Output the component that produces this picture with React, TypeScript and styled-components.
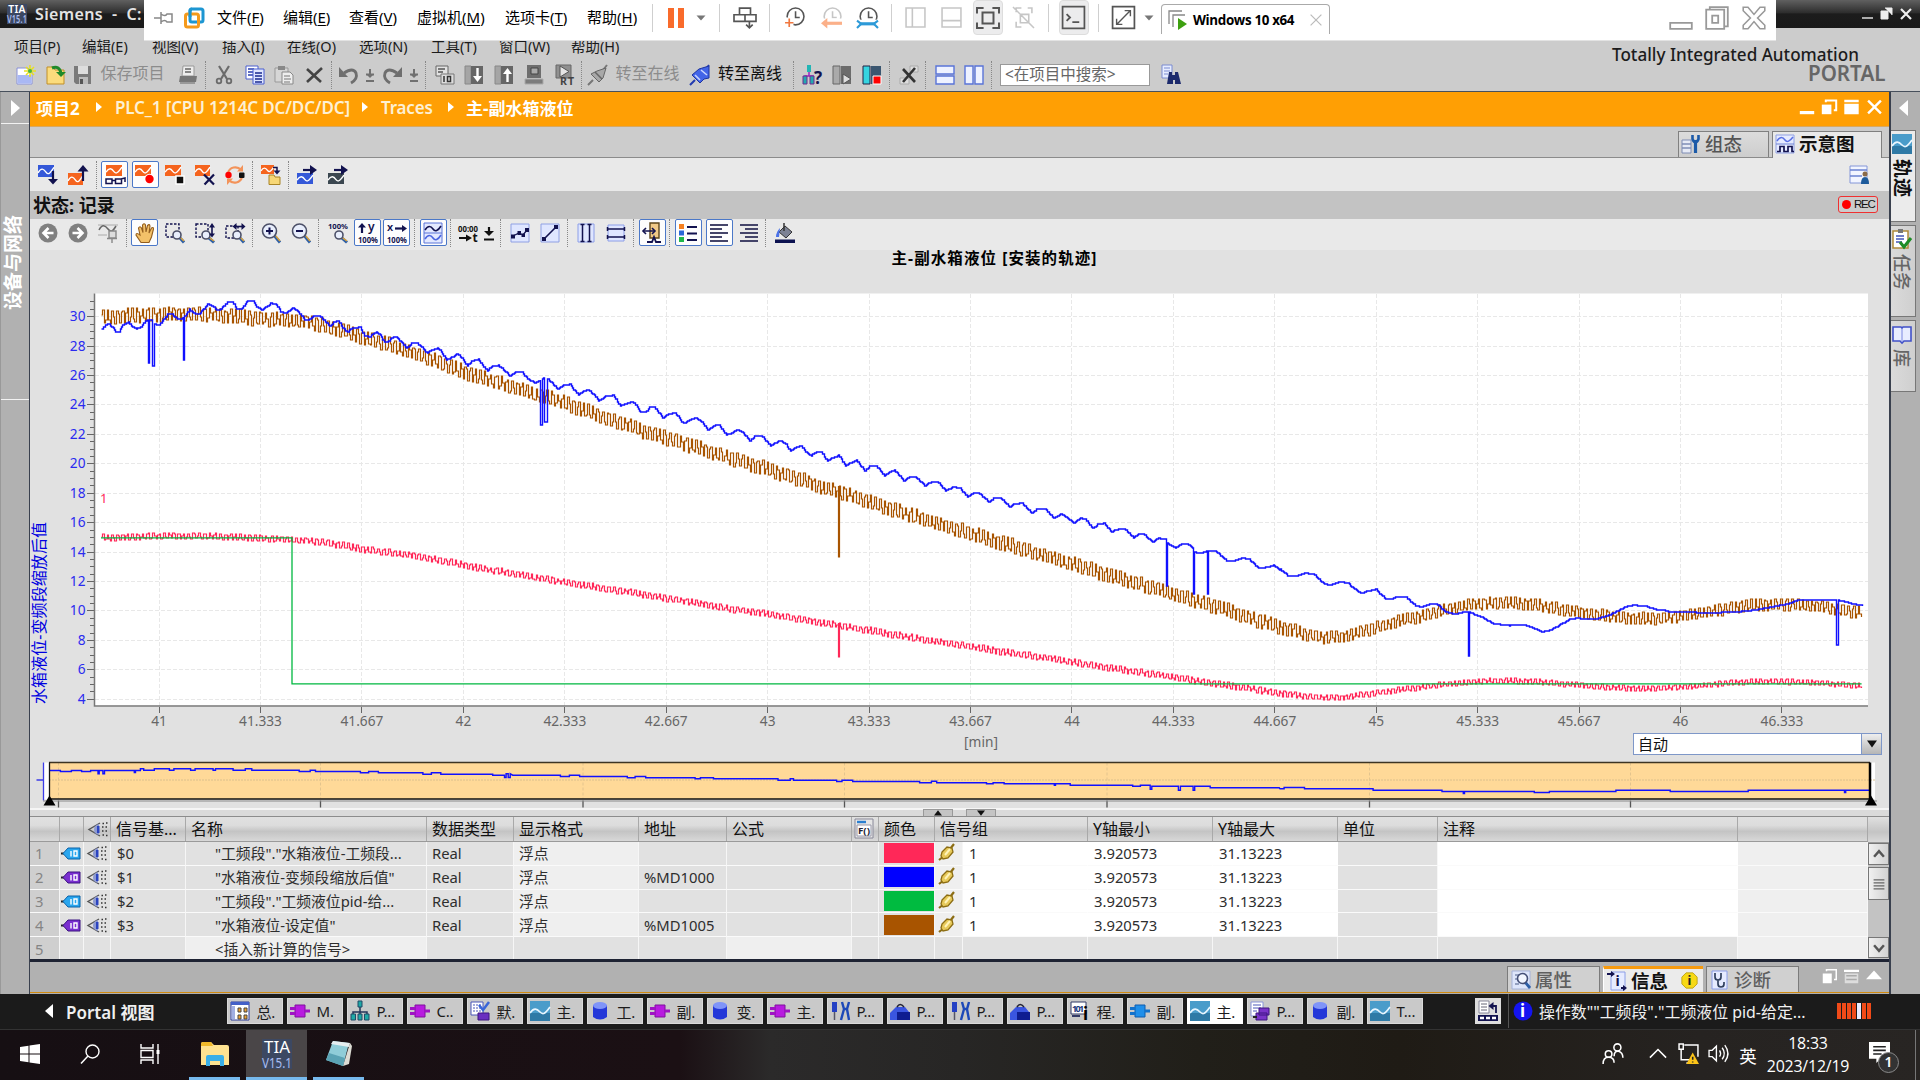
import React from "react";
import styled, { createGlobalStyle, css } from "styled-components";

const Global = createGlobalStyle`
  * { box-sizing: border-box; }
  html, body { margin: 0; padding: 0; width: 1920px; height: 1080px; overflow: hidden; }
  body { font-family: "Noto Sans", "Noto Sans CJK SC", sans-serif; font-size: 15px; color: #111; background: #b1b1b1; }
  svg { display: block; flex: none; overflow: visible; }
`;

/* ---------- frame ---------- */
const Screen = styled.div`
  position: relative; width: 1920px; height: 1080px; display: flex; flex-direction: column; overflow: hidden;
`;
const TitleBar = styled.header`
  height: 28px; flex: none; display: flex; align-items: center; padding: 0 7px 0 7px; color: #e4e4e4;
  background: linear-gradient(#606060, #2e2e2e 45%, #1c1c1c 50%, #1a1a1a);
  font-size: 16px; font-weight: 600; letter-spacing: 0.35px; white-space: pre;
`;
const TitleText = styled.span`margin-left: 8px; flex: 1;`;
const MenuBar = styled.nav`
  height: 36px; flex: none; background: #cccccc; display: flex; align-items: center; padding-left: 14px; padding-bottom: 2px; font-size: 14.5px;
`;
const MenuItem = styled.span<{ $w: number }>`width: ${(p) => p.$w}px; white-space: nowrap; color: #1b1b1b;`;
const Brand = styled.div`
  margin-left: auto; width: 308px; height: 36px; position: relative; top: 17px;
  font-weight: 500; line-height: 20px; color: #1c1c1c; font-size: 17.1px; white-space: nowrap;
  b { display: block; margin-left: 196px; font-size: 20.6px; color: #666; font-weight: 600; line-height: 20px; margin-top: -2px; }
  span { display: block; margin-top: 1px; }
`;
const ToolBar = styled.div<{ $h: number; $bg: string; $pl: number; $pb?: number }>`
  height: ${(p) => p.$h}px; flex: none; background: ${(p) => p.$bg}; padding-left: ${(p) => p.$pl}px;
  padding-bottom: ${(p) => p.$pb || 0}px; display: flex; align-items: center;
`;
const Slot = styled.div<{ $w: number }>`
  width: ${(p) => p.$w}px; flex: none; display: flex; align-items: center; justify-content: center;
`;
const Boxed = styled.div`
  width: 27px; height: 27px; border: 1.5px solid #4b78c8; background: #fdfdfd; border-radius: 2px;
  display: flex; align-items: center; justify-content: center; flex: none;
`;
const Sep = styled.div<{ $w: number }>`
  width: ${(p) => p.$w}px; height: 28px; flex: none; display: flex; justify-content: center;
  &::after { content: ""; border-left: 1px dotted #888; height: 100%; }
`;
const ToolLabel = styled.span<{ $w: number; $off?: boolean }>`
  width: ${(p) => p.$w}px; text-align: center; font-size: 16px; flex: none; white-space: nowrap; line-height: 20px; margin-top: -3px;
  color: ${(p) => (p.$off ? "#8c8c8c" : "#111")};
`;
const SearchBox = styled.div`
  width: 150px; height: 22px; margin-left: 6px; border: 1.5px solid #999; background: #fff; color: #666;
  font-size: 15.5px; line-height: 19px; padding-left: 4px; white-space: nowrap; flex: none;
`;
const Body = styled.div`height: 903px; flex: none; display: flex; border-top: 1.5px solid #47505c; background: #b1b1b1;`;

const LeftRail = styled.aside`
  width: 30px; flex: none; background: #b1b1b1; border-right: 1.5px solid #39404e; border-left: 1px solid #999;
  display: flex; flex-direction: column; align-items: center;
`;
const RailHead = styled.div<{ $plain?: boolean }>`
  height: 32px; width: 100%; border-bottom: 1.5px solid ${(p) => (p.$plain ? "transparent" : "#f2f2f2")}; display: flex; align-items: center; justify-content: center;
  margin-bottom: ${(p) => (p.$plain ? 6 : 0)}px; padding-right: ${(p) => (p.$plain ? 5 : 0)}px;
`;
const RailTitle = styled.div`
  height: 276px; width: 100%; border-bottom: 1.5px solid #f2f2f2; display: flex; justify-content: center; padding-top: 88px;
  span { writing-mode: vertical-rl; text-orientation: sideways; transform: rotate(180deg); color: #fff; font-weight: 700;
    font-size: 19px; height: 98px; line-height: 22px; margin-right: 4px; }
`;
const Center = styled.main`width: 1859px; flex: none; display: flex; flex-direction: column;`;
const RightRail = styled.aside`
  width: 31px; flex: none; border-left: 2px solid #39404e; background: #b1b1b1; display: flex; flex-direction: column;
`;
const RailTab = styled.div<{ $h: number; $mb: number; $active?: boolean }>`
  width: 25px; height: ${(p) => p.$h}px; margin-bottom: ${(p) => p.$mb}px; border: 1px solid #777; border-left: none;
  background: ${(p) => (p.$active ? "#ebebeb" : "linear-gradient(90deg,#dadada,#cfcfcf)")};
  display: flex; flex-direction: column; align-items: center; padding: 3px 2px 0 0;
  span { writing-mode: vertical-rl; text-orientation: sideways; margin-top: 5px; line-height: 22px; white-space: nowrap;
    font-size: ${(p) => (p.$active ? 19 : 18)}px; font-weight: ${(p) => (p.$active ? 700 : 500)}; color: ${(p) => (p.$active ? "#111" : "#666")}; }
`;
const Crumbs = styled.div`
  height: 35px; flex: none; background: #ff9f04; border-bottom: 1px solid #d9a860; color: #fff; display: flex; align-items: center;
  padding: 0 6px 4px 6px; font-size: 17px; font-weight: 600; white-space: nowrap;
`;
const Crumb = styled.span<{ $w: number; $strong?: boolean }>`
  width: ${(p) => p.$w}px; flex: none; color: ${(p) => (p.$strong ? "#fff" : "#fdf0d4")}; font-weight: ${(p) => (p.$strong ? 700 : 600)};
  letter-spacing: ${(p) => (p.$strong ? 0 : -0.15)}px;
`;
const CrumbArrow = styled.i<{ $w: number }>`
  width: ${(p) => p.$w}px; flex: none; &::after { content: ""; display: block; width: 0; border: 5px solid transparent; border-left: 6px solid #fff; border-right: 0; }
`;
const WinButtons = styled.div`margin-left: auto; display: flex; align-items: center; gap: 6px;`;
const TabStrip = styled.div`
  height: 31px; flex: none; background: #cccccc; border-bottom: 1.5px solid #8b8b8b; display: flex; justify-content: flex-end; align-items: flex-end; padding-right: 7px; gap: 3px;
`;
const ViewTab = styled.div<{ $w: number; $active?: boolean }>`
  width: ${(p) => p.$w}px; height: ${(p) => (p.$active ? 28 : 26)}px; margin-bottom: ${(p) => (p.$active ? -2 : 0)}px; border: 1.5px solid #808080; border-bottom: none;
  background: ${(p) => (p.$active ? "#e9e9e9" : "linear-gradient(#dcdcdc,#cdcdcd)")}; color: ${(p) => (p.$active ? "#111" : "#555")}; padding-bottom: ${(p) => (p.$active ? 4 : 2)}px;
  font-size: 18.5px; font-weight: ${(p) => (p.$active ? 700 : 500)}; display: flex; align-items: center; gap: 4px; padding-left: 2px; line-height: 24px;
`;
const StateBar = styled.div`
  height: 28px; flex: none; background: #c3c3c3; display: flex; align-items: center; justify-content: space-between; padding: 0 11px 2px 3px;
  font-size: 18px; font-weight: 700;
`;
const Rec = styled.div`
  width: 40px; height: 17px; border: 1.5px solid #f03030; border-radius: 3px; display: flex; align-items: center; gap: 3px; padding-left: 3px;
  font: 400 11.5px/14px "Liberation Sans", sans-serif; background: #ccc; letter-spacing: -1.3px;
  &::before { content: ""; width: 9px; height: 9px; border-radius: 50%; background: #f00; }
`;
const ChartPane = styled.section`height: 558px; flex: none; background: #e1e1e1; position: relative;`;
const ComboBox = styled.div`
  position: absolute; left: 1603px; top: 483px; width: 249px; height: 22px; border: 1px solid #7e97c8; background: #fff;
  font-size: 15px; line-height: 20px; padding-left: 4px; display: flex; justify-content: space-between;
  i { width: 20px; border-left: 1px solid #7e97c8; background: linear-gradient(#eee,#b5b5b5); display: flex; align-items: center; justify-content: center; }
`;
const Splitter = styled.div`
  height: 9px; flex: none; background: #dadada; border-top: 2px solid #f5f5f5; border-bottom: 1.5px solid #8c8c8c; display: flex; justify-content: center; gap: 13px; align-items: flex-end;
  i { width: 30px; height: 7px; background: #c4c4c4; border: 1px solid #999; border-bottom: 0; display: flex; align-items: center; justify-content: center; }
`;

/* ---------- signal table ---------- */
const COLS = "30px 24px 27px 75px 241px 87px 125px 88px 125px 27px 56px 28px 125px 125px 125px 100px 300px 130px";
const Table = styled.section`display: flex; height: 142px; flex: none; background: #efefef; overflow: hidden;`;
const Grid = styled.div`width: 1838px; flex: none;`;
const HeadRow = styled.div`
  display: grid; grid-template-columns: ${COLS}; height: 25px; border-bottom: 1.5px solid #9a9a9a; font-size: 16px;
  background: linear-gradient(#e0e0e0, #dcdcdc 35%, #c4c4c4 60%, #d8d8d8);
`;
const HeadCell = styled.div<{ $span?: number }>`
  ${(p) => p.$span && css`grid-column: span ${p.$span};`} border-right: 1px solid #a9a9a9; padding-left: 5px; display: flex; align-items: center; white-space: nowrap; line-height: 22px;
`;
const DataRow = styled.div`display: grid; grid-template-columns: ${COLS}; height: 23.8px; font-size: 14.8px;`;
const Cell = styled.div<{ $bg?: string; $pl?: number; $muted?: boolean }>`
  background: ${(p) => p.$bg || "#e1e1e1"}; padding-left: ${(p) => p.$pl ?? 5}px; color: ${(p) => (p.$muted ? "#858585" : "#2e2e2e")};
  border-right: 1px solid ${(p) => (p.$bg === "#fff" ? "#fff" : "#f6f6f6")}; border-bottom: 1.5px solid #fafafa;
  display: flex; align-items: center; white-space: nowrap; overflow: hidden; line-height: 20px;
`;
const Swatch = styled.div<{ $c: string }>`width: 50px; height: 20px; background: ${(p) => p.$c};`;
const ScrollCol = styled.div`
  width: 21px; background: #c3c3c3; display: flex; flex-direction: column;
`;
const ScrollTop = styled.div`height: 26px; background: linear-gradient(#e0e0e0, #c4c4c4 60%, #d8d8d8); border-bottom: 1.5px solid #9a9a9a;`;
const ScrollBtn = styled.div<{ $h: number; $mt?: number }>`
  height: ${(p) => p.$h}px; margin-top: ${(p) => p.$mt || 0}px; border: 1px solid #777; background: linear-gradient(90deg,#f0f0f0,#d2d2d2); display: flex; align-items: center; justify-content: center;
`;
const InfoStrip = styled.div`
  height: 34px; flex: none; border-top: 3px solid #1e2333; border-bottom: 1.5px solid #d08a10; background: #b1b1b1; display: flex; justify-content: flex-end; align-items: flex-end; gap: 3px;
`;
const InfoTab = styled.div<{ $w: number; $active?: boolean }>`
  width: ${(p) => p.$w}px; height: 26px; border: 1.5px solid #7b7b7b; border-bottom: 0; ${(p) => p.$active && css`border: 0; border-top: 3px solid #f59a10; border-left: 1px solid #fff;`}
  background: ${(p) => (p.$active ? "#ebebeb" : "#d0d0d0")}; color: ${(p) => (p.$active ? "#111" : "#5f5f5f")}; font-weight: ${(p) => (p.$active ? 700 : 500)};
  font-size: 18.5px; display: flex; align-items: center; gap: 4px; padding-left: 3px; line-height: 24px;
`;
const InfoBadge = styled.span`margin-left: 9px;`;
const InfoCorner = styled.div`width: 87px; height: 32px; display: flex; align-items: center; gap: 7px; padding-left: 20px;`;

/* ---------- portal bar & windows taskbar ---------- */
const PortalBar = styled.div`
  height: 36px; flex: none; background: #1b1b1b; display: flex; align-items: center; color: #efefef; border-bottom: 1px solid #333; padding-bottom: 1px;
`;
const PortalLink = styled.div`width: 226px; padding-left: 45px; display: flex; align-items: center; gap: 13px; font-size: 17px; font-weight: 600; white-space: nowrap;`;
const WinTabs = styled.div`display: flex; gap: 4px; width: 1249px; padding-left: 0.5px;`;
const WinTab = styled.div<{ $active?: boolean }>`
  width: 56px; height: 26px; background: ${(p) => (p.$active ? "#fff" : "#c9c9c9")}; border: 1px solid ${(p) => (p.$active ? "#fff" : "#dadada")}; color: #1c1c1c;
  display: flex; align-items: center; gap: 7px; padding-left: 2px; font-size: 15px; white-space: nowrap; overflow: hidden; letter-spacing: -0.2px;
`;
const KeepButton = styled.div`width: 26px; height: 26px; background: #ddd; display: flex; align-items: center; justify-content: center;`;
const Message = styled.div`
  margin-left: 7px; border-left: 1px solid #555; height: 100%; flex: 1; display: flex; align-items: center; padding-left: 4px; font-size: 15.9px; gap: 6px; white-space: nowrap; color: #f1f1f1;
  span { width: 292px; }
`;
const TaskBar = styled.footer`
  height: 50px; flex: none; display: flex; color: #fff; align-items: center;
  background: linear-gradient(90deg, #160f13 0, #1b1014 680px, #2b2a2a 770px, #272625 960px, #211f19 1200px, #1f1b15 1400px, #262321 1700px, #282523 1920px);
`;
const TaskCell = styled.div<{ $w: number; $on?: boolean; $line?: boolean }>`
  width: ${(p) => p.$w}px; height: 50px; flex: none; display: flex; align-items: center; justify-content: center;
  background: ${(p) => (p.$on ? "#4a4648" : "transparent")}; border-bottom: ${(p) => (p.$line ? "3px solid #76b9ed" : "3px solid transparent")};
`;
const TaskGap = styled.div<{ $w: number }>`width: ${(p) => p.$w}px; flex: none;`;
const Clock = styled.div`width: 88px; text-align: center; font-size: 15.9px; line-height: 23px; font-family: "Open Sans","Noto Sans",sans-serif; letter-spacing: -0.2px; white-space: nowrap;`;
const Lang = styled.span`width: 28px; text-align: center; font-size: 17.5px; flex: none;`;
const Badge = styled.span`
  position: absolute; left: 18px; top: 13px; width: 21px; height: 21px; border-radius: 50%; background: #333; border: 1.5px solid #8a8a8a; font-size: 14px; line-height: 18px; text-align: center; font-weight: 600;
`;
const Notice = styled.div`position: relative; width: 42px; height: 32px; padding: 3px 0 0 9px; flex: none;`;
const ShowDesktop = styled.div`width: 5px; height: 50px; border-left: 1px solid #777; margin-left: auto;`;

/* ---------- VM host bar (floats over the guest desktop) ---------- */
const HostBar = styled.div`
  position: absolute; left: 144px; top: 0; width: 1632px; height: 41px; background: #fff; border-bottom: 1.5px solid #e3e3e3; display: flex; align-items: flex-start; font-size: 15px; color: #000;
`;
const HostSlot = styled.div<{ $w: number }>`width: ${(p) => p.$w}px; height: 35px; flex: none; display: flex; align-items: center; justify-content: center;`;
const HostMenu = styled.span<{ $w: number }>`width: ${(p) => p.$w}px; flex: none; height: 35px; line-height: 34px; white-space: nowrap; u { text-underline-offset: 2px; }`;
const HostSep = styled.div<{ $w: number }>`width: ${(p) => p.$w}px; height: 32px; flex: none; padding-top: 4px; display: flex; justify-content: center; &::after { content: ""; width: 1px; height: 28px; background: #cfcfcf; }`;
const HostBox = styled.div`width: 30px; height: 35px; border: 1px solid #ddd; background: #ececed; border-radius: 4px; display: flex; align-items: center; justify-content: center; flex: none;`;
const HostTab = styled.div`
  width: 169px; height: 30px; margin-top: 4px; border: 1px solid #aaa; border-bottom: 0; border-radius: 4px 4px 0 0; display: flex; align-items: center; padding-left: 6px; gap: 5px; flex: none;
  font: 700 13.4px/28px "Open Sans","Noto Sans",sans-serif; letter-spacing: -0.35px; white-space: nowrap;
  span { width: 112px; }
`;

/* ---------- icons ---------- */
const I = ({ s = 20, w, children, vb = "0 0 20 20" }: any) => (
  <svg width={w || s} height={s} viewBox={vb} fill="none">{children}</svg>
);
const TiaTile = ({ s }: { s: number }) => (
  <I s={s} vb="0 0 30 30">
    <rect width="30" height="30" fill="#3c4862" />
    <text x="15" y="13.500" textAnchor="middle" fontSize="16" fill="#fff" textLength="26" lengthAdjust="spacingAndGlyphs">TIA</text>
    <text x="15" y="28.500" textAnchor="middle" fontSize="15" fill="#a9bdf0" textLength="30" lengthAdjust="spacingAndGlyphs">V15.1</text>
  </I>
);
const TraceTile = ({ c, x = 0, y = 0, w = 15, h = 12 }: any) => (
  <g transform={`translate(${x} ${y})`}>
    <rect width={w} height={h} fill={c} />
    <path d={`M0 ${h * 0.65}C${w * 0.2} ${h * 0.2} ${w * 0.35} ${h * 0.3} ${w * 0.5} ${h * 0.6}S${w * 0.8} ${h * 0.6} ${w} ${h * 0.2}`} stroke="#fff" strokeWidth="1.400" />
  </g>
);
const Lens = ({ x, y, r = 4 }: { x: number; y: number; r?: number }) => (
  <g><path d={`M${x + r * 0.7} ${y + r * 0.7}L19 19.500`} stroke="#2d5fa6" strokeWidth="3" /><path d={`M${x + r * 0.9} ${y + r * 0.7}L19 18`} stroke="#d9a23c" strokeWidth="1.500" /><circle cx={x} cy={y} r={r} fill="#e8eefc" stroke="#4c5068" strokeWidth="1.600" /></g>
);
const Star = () => (<g><path d="M14 0v12M8 6h12M10 2l8 8M18 2l-8 8" stroke="#e9e020" strokeWidth="1.600" /><circle cx="14" cy="6" r="2" fill="#3fb54a" /></g>);
const NAVY = "#12124f", OR = "#f5641e";
const ic: Record<string, React.ReactNode> = {
  newp: <I><path d="M1 3h11l4 4v12H1z" fill="#fff" stroke="#8890d8" /><path d="M1.500 10h14v8.500h-14z" fill="#a9b8f4" /><Star /></I>,
  open: <I><path d="M1 2h6l2 3h9v14H1z" fill="#fbdc7c" stroke="#c08f28" /><path d="M6 3q7-3 9 5" stroke="#1f8a2a" strokeWidth="3" /><path d="M10 7h10l-5 5z" fill="#1f8a2a" /></I>,
  save: <I><path d="M1 1h17v18H3l-2-2z" fill="#7a7a7a" /><path d="M5 1h10v8H5z" fill="#ddd" /><path d="M6 12h9v7H6z" fill="#bbb" /><path d="M7 14h3v5H7z" fill="#555" /></I>,
  print: <I><path d="M5 1h11v10H4z" fill="#eee" stroke="#999" /><path d="M7 4h6M7 7h6" stroke="#666" strokeWidth="1.500" /><path d="M2 11h17l-1 6H1z" fill="#777" /><path d="M2 17h15v2H2z" fill="#999" /></I>,
  cut: <I><path d="M5 1l8 13M15 1L7 14" stroke="#6b6b6b" strokeWidth="2.200" /><circle cx="5" cy="16" r="2.300" stroke="#6b6b6b" strokeWidth="1.800" /><circle cx="15" cy="16" r="2.300" stroke="#6b6b6b" strokeWidth="1.800" /></I>,
  copy: <I><path d="M1 1h12v13H1z" fill="#fff" stroke="#4a5fd0" /><path d="M3 4h6M3 7h6M3 10h6" stroke="#2a3fb0" strokeWidth="1.500" /><path d="M8 4h11v15H8z" fill="#dfe6ff" stroke="#4a5fd0" /><path d="M10 8h7M10 11h7M10 14h7M10 17h7" stroke="#1a2a90" strokeWidth="1.400" /></I>,
  paste: <I><path d="M1 3h13v14H1z" fill="#d6d6d6" stroke="#999" /><path d="M4 1h7v4H4z" fill="#888" /><path d="M8 7h8l3 3v9H8z" fill="#eee" stroke="#888" /><path d="M10 11h6M10 14h7M10 17h6" stroke="#777" /></I>,
  del: <I><path d="M3 4l14 13M18 3L3 17" stroke="#444" strokeWidth="2.600" /></I>,
  undo: <I><path d="M5 8q9-6 12 0 2 6-5 10" stroke="#6e6e6e" strokeWidth="2.800" /><path d="M0 2v10h9z" fill="#6e6e6e" /></I>,
  redo: <I><path d="M15 8Q6 2 3 8q-2 6 5 10" stroke="#6e6e6e" strokeWidth="2.800" /><path d="M20 2v10h-9z" fill="#6e6e6e" /></I>,
  pm: <I w={10} vb="5 0 10 20"><path d="M10 4v5M6 9.500h8M6 16h8" stroke="#707070" strokeWidth="2" /><path d="M7 10h6l-3 3z" fill="#707070" /></I>,
  pmd: <I w={10} vb="5 0 10 20"><path d="M10 4v5M5 16.500h10" stroke="#111" strokeWidth="2.200" /><path d="M5 8h10l-5 5z" fill="#111" /></I>,
  comp: <I><path d="M1 1h12v10H1z" fill="#e2e2e2" stroke="#666" /><path d="M3 4h7M3 7h5" stroke="#555" strokeWidth="1.300" /><path d="M6 9h13v10H6z" fill="#ddd" stroke="#777" /><path d="M9 11v6M12.500 11.500h3v5h-3z" stroke="#333" strokeWidth="1.500" /></I>,
  down: <I><path d="M1 1h6v18H1z" fill="#a5a5a5" stroke="#888" /><path d="M7 1h12v18H7z" fill="#666" /><path d="M13.500 3v10" stroke="#fff" strokeWidth="2.400" /><path d="M9 11h9l-4.500 6z" fill="#fff" /></I>,
  up: <I><path d="M1 1h6v18H1z" fill="#a5a5a5" stroke="#888" /><path d="M7 1h12v18H7z" fill="#666" /><path d="M13.500 7v10" stroke="#fff" strokeWidth="2.400" /><path d="M9 9h9l-4.500-6z" fill="#fff" /></I>,
  sim: <I><path d="M3 0h14v13H3z" fill="#6e6e6e" /><path d="M7 3h7v6H7z" fill="#aaa" stroke="#444" /><path d="M1 14h18v5H1z" fill="#7c7c7c" stroke="#aaa" /></I>,
  rt: <I><path d="M2 0h15v13H2z" fill="#909090" stroke="#666" /><path d="M6 1l9 5.500-9 5.500z" fill="#e5e5e5" stroke="#555" /><text x="6" y="20" fontSize="10.500" fontWeight="700" fill="#444" textLength="14">RT</text></I>,
  plugoff: <I><path d="M0 20l5-5M15 5l4-5" stroke="#777" strokeWidth="2" /><path d="M3 9l8 8 4-4 3-10-9 3z" fill="#a8a8a8" stroke="#666" /><path d="M7 7l7 7" stroke="#666" strokeWidth="1.500" /></I>,
  plugon: <I><path d="M0 20l5-5M15 5l4-5" stroke="#223bb0" strokeWidth="2" /><path d="M2 10l8 8 4-4 5-1V1L9 4z" fill="#4365e8" stroke="#1e34a0" /><path d="M5 10l5 5M11 5l6 5" stroke="#c9d5ff" strokeWidth="1.600" /></I>,
  netq: <I><path d="M5 0h4v7H5z" fill="#22b5b5" /><path d="M7 7v4M3 12v-1h8v1" stroke="#9a22c0" strokeWidth="1.500" /><path d="M1 11h4v8H1zM8 11h4v8H8z" fill="#22a8b0" stroke="#702a90" /><text x="12" y="18.500" fontSize="17" fontWeight="700" fill={NAVY}>?</text></I>,
  runoff: <I><path d="M1 1h7v18H1z" fill="#aaa" stroke="#666" /><path d="M9 1h10v18H9z" fill="#6c6c6c" /><path d="M11 9l8 5-8 5z" fill="#ddd" stroke="#555" /></I>,
  stop: <I><path d="M1 1h7v18H1z" fill="#35d4e0" stroke="#224" /><path d="M9 1h10v18H9z" fill="#3b5670" /><path d="M11 11h8v8h-8z" fill="#f00" stroke="#fff" /></I>,
  xx: <I><path d="M11 1h8v6h-8zM1 13h9v6H1z" fill="#ddd" stroke="#aaa" /><path d="M4 4l12 13M16 3L4 17" stroke="#333" strokeWidth="2.600" /></I>,
  splh: <I><path d="M1 1h18v8H1zM1 11h18v8H1z" fill="#eef2ff" stroke="#5a74d8" strokeWidth="1.400" /></I>,
  splv: <I><path d="M1 1h8v18H1zM11 1h8v18h-8z" fill="#eef2ff" stroke="#5a74d8" strokeWidth="1.400" /></I>,
  find: <I><path d="M1 0h10v13H1z" fill="#e6ecff" stroke="#7a8bd0" /><path d="M3 3h6M3 6h6M3 9h4" stroke="#7a8bd0" /><path d="M8 7h3v3h3V7h3l3 12h-6v-4h-2v4H6z" fill="#1c2a6c" /></I>,
  tdown: <I><TraceTile c="#3458d8" w={16} /><path d="M15 6v10" stroke={NAVY} strokeWidth="2.200" /><path d="M10 14h10l-5 5.500z" fill={NAVY} /></I>,
  tup: <I><TraceTile c={OR} y={8} /><path d="M15 4v12" stroke={NAVY} strokeWidth="2.200" /><path d="M9.500 6.500h11L15 0z" fill={NAVY} /></I>,
  tglass: <I><TraceTile c={OR} x={1} w={16} h={11} /><path d="M1 14h6v4.500H1zM10.500 14h6v4.500h-6zM7 15.500h3.500M16 14l4-1v4" stroke={NAVY} strokeWidth="1.500" /></I>,
  trec: <I><TraceTile c={OR} w={16} h={11} /><circle cx="14.500" cy="14" r="5.300" fill="#fff" /><circle cx="14.500" cy="14" r="4.200" fill="#f00" /></I>,
  tstop: <I><TraceTile c={OR} w={16} h={11} /><path d="M11 11h8v8h-8z" fill="#111" stroke="#fff" strokeWidth="1.500" /></I>,
  tdel: <I><TraceTile c={OR} w={15} h={11} /><path d="M9 9.500l10 10M19 9.500l-9.500 10" stroke={NAVY} strokeWidth="2.200" /></I>,
  tloop: <I><path d="M3 8a7.500 7.500 0 0 1 13-3M17 12a7.500 7.500 0 0 1-13 3" stroke="#f3935a" strokeWidth="2.200" /><path d="M12 6.500h6V0zM8 13.500H2V20z" fill="#f3935a" /><circle cx="3.500" cy="10" r="3.200" fill="#f00" /><rect x="14" y="7.500" width="5.500" height="5.500" rx="1" fill="#111" /></I>,
  texp: <I><TraceTile c={OR} w={13} h={9} /><path d="M12 2.500h4v4" stroke={NAVY} strokeWidth="1.500" /><path d="M12.500 5.500h7L16 9.500z" fill={NAVY} /><path d="M8 10h5l1 2h5v7.500H8z" fill="#f7d776" stroke="#a88427" /></I>,
  tarrb: <I><TraceTile c="#3458d8" y={8} w={16} h={11} /><path d="M6 5h9" stroke={NAVY} strokeWidth="2.200" /><path d="M13 0l7 5-7 5z" fill={NAVY} /></I>,
  tarrk: <I><TraceTile c="#3b4750" y={8} w={16} h={11} /><path d="M6 5h9" stroke={NAVY} strokeWidth="2.200" /><path d="M13 0l7 5-7 5z" fill={NAVY} /></I>,
  prev: <I><circle cx="10" cy="10" r="9.500" fill="#808080" /><path d="M15.500 10H7M10.500 5l-5 5 5 5" stroke="#fff" strokeWidth="2.600" /></I>,
  next: <I><circle cx="10" cy="10" r="9.500" fill="#808080" /><path d="M4.500 10H13M9.500 5l5 5-5 5" stroke="#fff" strokeWidth="2.600" /></I>,
  wpin: <I><path d="M0 2h20M0 12h9" stroke="#aaa" /><path d="M1 7c3-6 6-5 9-1s5 2 8-3" stroke="#666" strokeWidth="1.500" /><path d="M11 8h7v7h-7zM9 15.500h10M14 16v4" stroke="#888" strokeWidth="1.400" fill="#ddd" /></I>,
  hand: <I><path d="M6 19.500L1 12q0-3 4 0L3.500 5q1.500-2.500 3 0L8 9.500 7.500 2q2-2.500 3 0L11 9l1.500-6.500q2-2 2.500.5L14 10l2.500-5q2-1.500 2 1l-2 8-2.500 5.500z" fill="#f3c169" stroke="#935d1c" strokeWidth="1.100" /></I>,
  zoomr: <I><path d="M1 1h13v13H1z" stroke={NAVY} strokeDasharray="2.500 1.500" strokeWidth="1.400" /><Lens x={12} y={12} /></I>,
  zoomv: <I><path d="M1 1h12v13H1z" stroke={NAVY} strokeDasharray="2.500 1.500" strokeWidth="1.400" /><Lens x={11} y={12} /><path d="M17 3v9" stroke={NAVY} strokeWidth="1.600" /><path d="M14 4.500h6L17 0zM14 10.500h6l-3 4z" fill={NAVY} /></I>,
  zoomh: <I><path d="M1 3h12v12H1z" stroke={NAVY} strokeDasharray="2.500 1.500" strokeWidth="1.400" /><Lens x={12} y={12} /><path d="M10 3.500h8" stroke={NAVY} strokeWidth="1.600" /><path d="M11.500 0v7L7.500 3.500zM16.500 0v7l4-3.500z" fill={NAVY} /></I>,
  zin: <I><Lens x={8.5} y={8} r={7} /><path d="M5 8h7M8.500 4.500v7" stroke={NAVY} strokeWidth="2" /></I>,
  zout: <I><Lens x={8.5} y={8} r={7} /><path d="M5 8h7" stroke={NAVY} strokeWidth="2" /></I>,
  z100: <I><text x="0" y="5.500" fontSize="7.500" fontWeight="700" fill={NAVY} textLength="20" lengthAdjust="spacingAndGlyphs">100%</text><Lens x={11} y={12} r={4} /></I>,
  y100: <I><path d="M4 3v7" stroke={NAVY} strokeWidth="2.200" /><path d="M0 4.500h8L4 0z" fill={NAVY} /><text x="10" y="8" fontSize="12" fontWeight="600" fill={NAVY}>y</text><text x="0" y="19.500" fontSize="8" fontWeight="700" fill={NAVY} textLength="20" lengthAdjust="spacingAndGlyphs">100%</text></I>,
  x100: <I><text x="0" y="8" fontSize="11" fontWeight="600" fill={NAVY}>x</text><path d="M8 5.500h8" stroke={NAVY} strokeWidth="2.200" /><path d="M15 2v7l5-3.500z" fill={NAVY} /><text x="0" y="19.500" fontSize="8" fontWeight="700" fill={NAVY} textLength="20" lengthAdjust="spacingAndGlyphs">100%</text></I>,
  waves: <I><path d="M1 0h18v20H1z" fill="#e3e9ff" stroke="#5a74d8" /><path d="M2 7c3-5 6-4 8-1s5 2 8-3" stroke={NAVY} strokeWidth="1.600" /><path d="M2 16c3-5 6-4 8-1s5 2 8-3" stroke="#4b66e0" strokeWidth="1.600" /><path d="M1 10h18" stroke="#5a74d8" /></I>,
  time: <I><text x="0" y="8.500" fontSize="9" fontWeight="700" fill="#111" textLength="20" lengthAdjust="spacingAndGlyphs">00:00</text><path d="M1 15h8" stroke="#111" strokeWidth="2" /><path d="M8 11.500v7l6-3.500z" fill="#111" /><text x="14.500" y="19" fontSize="12" fontWeight="700" fill="#111">t</text></I>,
  dots: <I><path d="M1 1h18v18H1z" fill="#dfe6ff" stroke="#8fa0e4" /><path d="M3 13l6-3 4 2 4-5" stroke={NAVY} strokeWidth="1.300" /><path d="M1 11.500h4v4H1zM7.500 8h3.500v4H7.500zM11.500 10.500H15V14h-3.500zM15 5h4v4h-4z" fill={NAVY} /></I>,
  line: <I><path d="M1 1h18v18H1z" fill="#dfe6ff" stroke="#8fa0e4" /><path d="M4 16L16 4" stroke={NAVY} strokeWidth="1.600" /><path d="M2 14h4v4H2zM14 2h4v4h-4z" fill={NAVY} /></I>,
  vcur: <I><path d="M2 1h16v18H2z" fill="#dfe6ff" stroke="#8c9ee8" /><path d="M6.500 2v16M13.500 2v16M4.500 1.500h4M11.500 1.500h4M4.500 18.500h4M11.500 18.500h4" stroke={NAVY} strokeWidth="1.500" /></I>,
  hcur: <I><path d="M2 2h16v16H2z" fill="#dfe6ff" stroke="#8c9ee8" /><path d="M1 6h18M1 14h18M1.500 4v4M18.500 4v4M1.500 12v4M18.500 12v4" stroke={NAVY} strokeWidth="1.500" /></I>,
  fit: <I><path d="M8 0h9v15H8z" fill="#f0c987" stroke="#5c451a" strokeWidth="1.400" /><path d="M1 8h12" stroke={NAVY} strokeWidth="1.500" /><path d="M4 5L1 8l3 3M10 5l3 3-3 3" stroke={NAVY} strokeWidth="1.600" /><path d="M5 19h5l2-5 2 5h5" stroke={NAVY} strokeWidth="1.800" /></I>,
  legend: <I><path d="M1 1h5v5H1z" fill="#f58020" /><path d="M1 7.500h5v5H1z" fill="#2a68d8" /><path d="M1 14h5v5H1z" fill="#1fb84a" /><path d="M9 4h10M9 10.500h10M9 17h10" stroke={NAVY} strokeWidth="2" /></I>,
  left: <I><path d="M1 2h18M1 6h12M1 10h18M1 14h12M1 18h18" stroke="#45456a" strokeWidth="1.800" /></I>,
  right: <I><path d="M1 2h18M6 6h13M1 10h18M6 14h13M1 18h18" stroke="#45456a" strokeWidth="1.800" /></I>,
  fill: <I><path d="M10 3l7 6-6 6-7-6z" fill="#7d8294" stroke="#333" /><path d="M9 8V0" stroke="#333" strokeWidth="1.500" /><path d="M5 5q-4 4-4 9h3z" fill="#4b72e8" /><path d="M0 16.500h20v3.500H0z" fill="#0c1250" /></I>,
  cfg: <I><path d="M1 6h9v4H1zM1 10h9v4H1zM1 14h9v5H1z" fill="#e6eaf5" stroke="#7e8db5" /><path d="M14.500 6v13" stroke="#1c5aa8" strokeWidth="3.200" /><path d="M11.500 1v4q1 3 3 3t3-3V1" stroke="#1c5aa8" strokeWidth="2.600" /></I>,
  diag: <I><path d="M1 1h18v18H1z" fill="#e6ebff" stroke="#8fa0e4" /><path d="M2 7c3-5 6-4 8-1s5 1 8-3" stroke="#5a70e4" strokeWidth="1.500" /><path d="M1 10h18" stroke="#6f83d4" /><path d="M2 17.500h3v-5h4v5h4v-5h4v5h2" stroke={NAVY} strokeWidth="1.700" /></I>,
  layout: <I><path d="M1 1h17v17H1z" fill="#f2f5ff" stroke="#8496d8" /><path d="M1 5h17M1 11h12" stroke="#6b82d2" strokeWidth="1.300" /><circle cx="16" cy="9" r="2.500" fill="#8a6a48" /><path d="M12 19q0-7 4-7t4 7z" fill="#1d5b9c" /></I>,
  trace: <I><rect width="20" height="20" fill="#4a9cca" /><rect y="12" width="20" height="8" fill="#2f7aa6" /><path d="M0 12c4-6 7-4 10-1s5 2 10-5" stroke="#e9f6ff" strokeWidth="1.700" /></I>,
  task: <I><path d="M1 2h15v17H1z" fill="#fff" stroke="#b08a3a" strokeWidth="1.500" /><path d="M6 0h5v4H6z" fill="#777" /><path d="M4 7h8M4 10h8M4 13h6" stroke="#4455b8" strokeWidth="1.500" /><path d="M8 13l4 5 7-9" stroke="#1d8c26" strokeWidth="3" /></I>,
  book: <I><path d="M1 3h8l1 1 1-1h8v14h-7l-2 2-2-2H1z" fill="#e8edff" stroke="#4050c8" strokeWidth="1.600" /><path d="M10 4v13" stroke="#7a88e0" /></I>,
  fx: <I><path d="M1 0h18v19H1z" fill="#e6e6e6" stroke="#889" /><path d="M3 3h9" stroke="#2a7fd0" strokeWidth="2.400" /><path d="M3 6h14v11H3z" fill="#fff" stroke="#99a" /><text x="4" y="15" fontSize="9" fontWeight="700" fill="#223" textLength="12" lengthAdjust="spacingAndGlyphs">F()</text></I>,
  eye: <I><path d="M12 4L1 10.500l11 6.500" stroke="#555" strokeWidth="1.400" /><path d="M11 5v11Q6 15 6 10.500T11 5z" fill="#8d9ad0" /><path d="M9 7h2.500v7H9z" fill="#2b44c0" /><path d="M14.500 4.500h1.500M18 4h1.500M14 8h1.500M17.500 8h1.500M14 12h1.500M17.500 12h1.500M14.500 16h1.500M18 16.500h1.500" stroke="#333" strokeWidth="1.600" /></I>,
  chain: <I><path d="M2 17l5-4M13 6l4-5" stroke="#8c6d14" strokeWidth="2.200" /><path d="M5 9l5-5 5 1 1 4-5 6-5 1-2-3z" fill="#e7c95a" stroke="#8c6d14" strokeWidth="1.300" /><path d="M8 12l5-6" stroke="#fff3b8" strokeWidth="2" /></I>,
  props: <I><path d="M1 1h18v18H1z" fill="#dde5fa" stroke="#a5b2d8" /><path d="M4 5h5M4 9h3M4 14h4" stroke="#7b89ad" strokeWidth="1.500" /><path d="M14 12l5 6" stroke="#2d5fa6" strokeWidth="2.800" /><circle cx="11.500" cy="8.500" r="5" fill="#f2f6ff" stroke="#444f76" strokeWidth="1.600" /></I>,
  info: <I><path d="M4 1h14v18H4z" fill="#e6ebff" stroke="#8c9ee8" /><path d="M0 3h5M14 17h3" stroke={NAVY} strokeWidth="2" /><path d="M4 0v6l4-3zM16 14v6l4-3z" fill={NAVY} /><text x="8.500" y="15" fontSize="14" fontWeight="700" fill={NAVY}>i</text></I>,
  warn: <I s={17}><path d="M6 1h8l5 5v8l-5 5H6l-5-5V6z" fill="#f7d914" stroke="#b89c10" /><text x="7.500" y="15.500" fontSize="15" fontWeight="700" fill="#222">i</text></I>,
  steth: <I><path d="M2 1h15v18H2z" fill="#e6ebff" stroke="#8c9ee8" /><path d="M5 3v4q0 3 3 3t3-3V3M8 10v4q0 3 3 3t3-3v-2" stroke="#30405e" strokeWidth="1.700" /></I>,
  over: <I><path d="M1 1h18v18H1z" fill="#fff" stroke="#2a3a9a" /><path d="M1 1h18v3H1z" fill="#4460c8" /><path d="M2 5h3v13H2z" fill="#4460c8" opacity=".5" /><path d="M8 7h3v4H8zM8 14h3v4H8zM14 7h3v4h-3zM14 14h3v4h-3z" fill="#f0a030" stroke="#444" /></I>,
  fbp: <I><path d="M5 4h10v12H5z" fill="#b81ae0" stroke="#7e109c" /><path d="M0 7.500h5M0 12.500h5M15 10h5" stroke="#a012c4" strokeWidth="2.800" /></I>,
  fbb: <I><path d="M5 4h10v12H5z" fill="#1f8fea" stroke="#0f5cae" /><path d="M0 7.500h5M0 12.500h5M15 10h5" stroke="#1272cc" strokeWidth="2.800" /></I>,
  net: <I><path d="M10 5v6M3 14v-3h14v3M10 11v3" stroke="#23355a" strokeWidth="1.500" /><path d="M8 0h4v6H8zM1 13h4.500v6H1zM8 13h4v6H8zM14.500 13H19v6h-4.500z" fill="#1fa9a6" stroke="#214a66" /></I>,
  tags: <I><path d="M1 1h12v13H1z" fill="#fff" stroke="#4b57b8" /><path d="M3 4h8M3 7h8M3 10h8" stroke="#4b57b8" strokeDasharray="2 1" /><path d="M9 4l4 5 6-8" stroke="#3a66d8" strokeWidth="2.500" /><path d="M8 12h11v7H8z" fill="#6a2fc0" stroke="#3c1680" /></I>,
  tagp: <I><path d="M1 1h12v14H1z" fill="#fff" stroke="#8a94d8" /><path d="M3 4h8M3 7h8M3 10h4" stroke="#4b57b8" /><path d="M9 7h10v7H9zM6 12h11v7H6z" fill="#7a35c8" stroke="#3c1680" /><path d="M3 16h4" stroke="#222" strokeWidth="2" /></I>,
  db: <I><path d="M3 4v12q7 5 14 0V4z" fill="#2438d8" /><ellipse cx="10" cy="4.500" rx="7" ry="3.500" fill="#7f94f8" /></I>,
  tools: <I><path d="M2 1h5v10H2z" fill="#2440c4" /><path d="M4.500 11v8" stroke="#556" strokeWidth="1.500" /><path d="M12 1l2 7h3l2-7M14 8l-3 11M17 8l2 11" stroke="#1c48b8" strokeWidth="2.400" /></I>,
  box: <I><path d="M0 12l6-6h9l4 5v8H0z" fill="#3a55e0" /><path d="M7 6q3-5 7 0" stroke="#223" strokeWidth="1.500" /><path d="M7 11h13v8H7z" fill="#0e1c90" /></I>,
  proginf: <I><path d="M1 1h15v12H1z" fill="#fff" stroke="#333a66" /><text x="2" y="10.500" fontSize="9" fontWeight="700" fill="#223a80" textLength="12">101</text><path d="M2 15h8" stroke="#333a66" strokeWidth="2" /><text x="13" y="19" fontSize="17" fontWeight="700" fill="#000">i</text></I>,
  keep: <I><path d="M1 0h10v12H1z" fill="#fff" stroke="#889" /><path d="M3 3h6M3 6h6M3 9h6" stroke="#667" /><path d="M14 5h4v7" stroke={NAVY} strokeWidth="1.800" /><path d="M15.500 1v8l-5-4z" fill={NAVY} /><path d="M0 14h20v6H0z" fill={NAVY} /><path d="M2 17h4M8 17h4M14 17h4" stroke="#fff" strokeWidth="2.400" /></I>,
};
const TagIcon = ({ c, d }: { c: string; d: string }) => (
  <I><path d="M0 10.500h3" stroke="#222" strokeWidth="2" /><path d="M7 5h12v11H7l-5-5.500z" fill={c} stroke={d} /><path d="M10 8v5.500M13 8h3v5h-3z" stroke="#fff" strokeWidth="1.400" /></I>
);

/* ---------- trace data ---------- */
type P = [number, number];
const seg = (ox: number, oy: number, raw: string): P[] =>
  raw.trim().split(/\s+/).map((s) => {
    const [x, y] = s.split(",").map(Number);
    return [ox + x / 2.45, oy + y / 3] as P;
  });
const A = [0, 260] as const, B = [640, 260] as const, C = [1280, 400] as const;
const blue: P[] = [
  ...seg(...A, `247,208 252,200 257,194 266,193 273,200 282,215 290,215 300,195 313,186 320,198 332,207 343,202 355,183 363,179 363,310 366,310 366,179 372,181 372,317 378,317 378,193 388,195 400,176 408,163 420,163 430,175 443,178 449,172 449,299 451,299 451,168 462,148 474,160 486,163 495,150 508,132 518,137 530,151 540,148 555,125 568,127 578,146 590,148 606,122 618,122 628,140 640,151 650,142 662,130 676,134 687,155 700,160 716,145 730,155 745,180 755,180 768,167 780,168 792,180 807,199 816,187 828,182 838,205 850,215 862,204 880,202 892,228 905,230 920,215 930,225 940,246 948,246 962,230 972,233 985,250 995,265 1008,250 1020,250 1032,262 1045,280 1055,270 1070,264 1080,275 1093,299 1102,295 1118,282 1130,295 1143,317 1155,303 1170,298 1180,315 1192,332 1205,318 1220,316 1235,333 1248,347 1262,336 1278,337 1292,356 1308,370 1324,360 1324,494 1327,494 1327,358 1331,353 1333,486 1340,486 1340,358 1352,370 1365,388 1380,375 1395,373 1415,405 1425,395 1440,390 1455,405 1465,422 1480,410 1500,406 1518,437 1530,432 1548,425 1560,440 1566,452`),
  ...seg(...B, `0,457 12,457 22,442 33,440 45,458 55,474 68,462 85,459 105,490 120,480 135,473 150,485 165,509 180,497 192,494 210,524 220,522 235,510 248,515 268,543 280,528 296,527 318,557 328,550 343,542 355,553 367,573 378,563 393,557 405,575 418,587 430,575 443,577 457,602 468,595 485,586 502,617 512,610 528,601 550,632 562,618 578,618 597,647 610,635 622,631 645,662 658,650 672,650 697,677 710,668 728,665 747,692 765,682 782,683 800,712 815,698 828,698 853,726 865,715 880,713 905,741 915,731 935,730 958,760 970,748 990,746 1012,775 1030,762 1042,770 1062,790 1078,775 1090,778 1108,805 1120,793 1135,790 1155,816 1170,806 1185,806 1207,833 1220,822 1232,823 1255,846 1268,835 1288,837 1288,977 1290,977 1290,850 1310,864 1325,852 1340,852 1356,868 1356,1003 1358,1003 1358,877 1372,880 1389,872 1389,1003 1391,1003 1391,872 1408,872 1435,902 1455,902 1475,894 1490,898 1515,925 1535,922 1550,916 1566,930`),
  ...seg(...C, `0,508 18,527 42,527 58,519 80,522 105,550 120,556 135,549 150,545 165,550 195,580 215,573 233,568 258,598 270,598 285,590 308,592 330,617 343,621 365,613 382,613 405,635 425,643 445,637 461,635 461,768 463,768 463,637 490,650 525,673 548,674 560,677 575,674 600,675 640,695 655,693 680,678 708,657 725,655 770,658 800,648 850,618 862,616 888,617 925,630 940,631 950,635 1010,637 1060,640 1090,636 1140,634 1180,626 1215,618 1240,612 1270,599 1361,599 1361,734 1367,734 1367,601 1385,606 1410,614 1425,617`),
];
const brownMid: P[] = [
  ...seg(...A, `247,172 300,168 370,165 440,162 500,162 560,168 620,175 700,180 760,187 800,200 850,217 900,237 950,253 1000,275 1050,295 1100,320 1150,342 1200,360 1250,380 1300,400 1350,415 1400,437 1450,460 1500,482 1566,508`),
  ...seg(...B, `2,512 70,537 150,568 230,598 310,628 400,662 450,685 500,700 560,727 640,757 720,788 800,818 880,847 960,877 1040,905 1120,936 1200,965 1280,992 1360,1023 1440,1052 1500,1077 1566,1100`),
  ...seg(...C, `2,683 50,700 100,712 140,712 180,700 240,680 300,660 360,644 420,623 480,612 540,608 600,610 660,622 720,635 780,645 840,653 900,657 960,652 1020,640 1080,628 1140,617 1200,614 1260,613 1320,620 1370,630 1425,638`),
];
const pinkMid: P[] = [
  ...seg(...A, `247,833 400,828 500,828 600,833 700,838 780,845 900,870 1000,885 1100,907 1200,930 1300,950 1400,970 1500,990 1566,1000`),
  ...seg(...B, `2,1003 100,1022 200,1043 300,1060 400,1080 480,1095 600,1120 700,1140 800,1158 900,1178 1000,1195 1100,1215 1200,1233 1300,1250 1400,1270 1500,1287 1566,1300`),
  ...seg(...C, `2,880 50,888 100,893 150,892 200,884 300,868 400,853 500,843 560,842 620,845 700,852 800,862 900,866 1000,860 1100,848 1200,844 1300,847 1425,858`),
];
const at = (pts: P[], x: number) => {
  let i = 1;
  while (i < pts.length - 1 && pts[i][0] < x) i++;
  const [a, b] = [pts[i - 1], pts[i]];
  return a[1] + ((b[1] - a[1]) * (x - a[0])) / (b[0] - a[0]);
};
const f = (n: number) => n.toFixed(1);
const snap = (n: number) => Math.round(n) + 0.5;
/* Ripple sampled and held at the controller's trace interval, drawn on whole pixels. */
const ripple = (mid: P[], amp: (x: number) => number, spike: P) => {
  let d = "";
  let done = false;
  for (let x = mid[0][0], n = 0; x <= 1861.600; x += 1.520, n++) {
    const s = Math.max(-1, Math.min(1, 1.350 * Math.sin((2 * Math.PI * x) / 5.120 + 0.900 * Math.sin(x / 9.300))));
    const y = at(mid, x) + amp(x) * s * (0.860 + 0.140 * Math.sin(n * 2.300));
    d += n ? `H${snap(x)}V${snap(y)}` : `M${snap(x)} ${snap(y)}`;
    if (!done && x >= spike[0]) {
      d += `V${snap(spike[1])}h1V${snap(y)}`;
      done = true;
    }
  }
  return d;
};
/* Staircase between recorded points; vertical drop-outs stay vertical. */
const stairs = (pts: P[]) => {
  let d = `M${snap(pts[0][0])} ${snap(pts[0][1])}`;
  for (let i = 1; i < pts.length; i++) {
    const [a, b] = [pts[i - 1], pts[i]];
    const n = Math.max(1, Math.round((b[0] - a[0]) / 1.400));
    for (let k = 1; k <= n; k++) {
      d += `H${snap(a[0] + ((b[0] - a[0]) * k) / n)}V${snap(a[1] + ((b[1] - a[1]) * k) / n)}`;
    }
  }
  return d;
};
const brownPath = ripple(brownMid, (x) => (x < 1300 ? 7.600 : 6.300), [837, 557]);
const pinkPath = ripple(pinkMid, (x) => (x < 1300 ? 3.300 : 2.800), [837, 657]);
const bluePath = stairs(blue);
const overview = seg(0, 740, `120,93 148,93 148,96 175,96 175,93 200,93 200,96 222,96 222,93 240,93 240,103 243,103 243,93 252,93 252,103 256,103 256,93 329,93 329,99 332,99 332,93 344,93 344,88 352,88 352,92 378,92 378,88 415,88 415,92 426,92 426,88 467,88 467,92 478,92 478,88 522,88 522,92 528,92 528,88 571,88 571,92 601,92 601,88 617,88 617,92 733,92 733,96 760,96 760,92 773,92 773,96 883,96 883,100 903,100 903,96 927,96 927,100 1036,100 1036,104 1057,104 1057,100 1080,100 1080,104 1207,104 1207,107 1236,107 1236,114 1240,114 1240,103 1245,103 1245,114 1250,114 1250,103 1256,107 1373,107 1373,111 1395,111 1395,107 1420,107 1420,111 1537,111 1537,115 1556,115 1556,111 1568,111`)
  .concat(seg(640, 740, `14,111 14,115 135,115 135,118 148,118 148,115 180,115 180,118 338,118 338,122 368,122 368,118 376,118 376,122 482,122 482,126 495,126 495,122 521,122 521,126 685,126 685,130 714,130 714,125 727,125 727,130 849,130 849,133 865,133 865,130 892,130 892,133 1015,133 1015,137 1018,137 1018,133 1054,133 1054,137 1207,137 1207,140 1226,140 1226,137 1250,137 1250,149 1254,149 1254,140 1319,140 1319,152 1324,152 1324,140 1355,140 1355,152 1359,152 1359,140 1397,140 1397,145 1566,145`))
  .concat(seg(1280, 740, `0,148 10,148 10,144 60,144 60,148 228,148 228,152 397,152 397,156 449,156 449,162 452,162 452,156 623,156 623,159 660,159 660,156 823,156 823,152 956,152 956,156 1147,156 1147,152 1383,152 1383,159 1386,159 1386,152 1446,152`))
  .map((p, i) => `${i ? "L" : "M"}${f(p[0])} ${f(p[1])}`).join("");

const yAt = (v: number) => 699.300 - (v - 4) * 14.717;
const xAt = (k: number) => 159.100 + k * 101.430;
const xLabels = ["41", "41.333", "41.667", "42", "42.333", "42.667", "43", "43.333", "43.667", "44", "44.333", "44.667", "45", "45.333", "45.667", "46", "46.333"];

function Chart() {
  const majors = Array.from({ length: 14 }, (_, i) => 4 + i * 2);
  const minors = Array.from({ length: 55 }, (_, i) => 4 + i * 0.5);
  return (
    <svg width={1859} height={558} viewBox="30 250.500 1859 558" fontFamily='"Noto Sans","Noto Sans CJK SC",sans-serif' fill="none">
      <text x="994" y="264" textAnchor="middle" fontSize="15.500" fontWeight="700" fill="#000" textLength="205">主-副水箱液位 [安装的轨迹]</text>
      <rect x="94" y="294" width="1774" height="413" fill="#fff" />
      <g stroke="#e8e8e8" strokeDasharray="4 2" shapeRendering="crispEdges">
        {majors.map((v) => <path key={v} d={`M95 ${Math.floor(yAt(v)) + 0.5}H1868`} />)}
        {xLabels.map((l, i) => <path key={l} d={`M${Math.floor(xAt(i)) + 0.5} 294V706`} />)}
      </g>
      <g stroke="#666" shapeRendering="crispEdges">
        {minors.map((v) => <path key={v} d={`M${v % 2 ? 90 : 87} ${Math.floor(yAt(v)) + 0.5}H94`} />)}
        {xLabels.map((l, i) => <path key={l} d={`M${Math.floor(xAt(i)) + 0.5} 707v6`} />)}
      </g>
      <path d="M94.500 294V706.500H1868" stroke="#777" strokeWidth="1.500" />
      <g fontSize="13.700" fill="#2a2af0" textAnchor="end">
        {majors.map((v) => <text key={v} x="85.500" y={yAt(v) + 5}>{v}</text>)}
      </g>
      <g fontSize="13.700" fill="#666" textAnchor="middle">
        {xLabels.map((l, i) => <text key={l} x={xAt(i)} y="726.500">{l}</text>)}
        <text x="981" y="747">[min]</text>
      </g>
      <text x="100" y="503.500" fontSize="13" fill="#ff2858">1</text>
      <text transform="translate(45 704.500) rotate(-90)" fontSize="16" fill="#0000e0" textLength="182">水箱液位-变频段缩放后值</text>
      <g strokeWidth="1.200">
        <path d={brownPath} stroke="#a85400" />
        <path d={pinkPath} stroke="#ff2858" />
        <path d="M101 538.300H292V684.300H1861.600" stroke="#00b840" strokeWidth="1.300" />
        <path d={bluePath} stroke="#1010ff" strokeWidth="1.400" />
      </g>

      <rect x="43" y="763" width="6" height="37" fill="#fff" />
      <rect x="1870" y="763" width="5" height="37" fill="#fff" />
      <rect x="49" y="763" width="1821" height="36.500" fill="#ffd998" />
      <path d="M49 780.500H1876" stroke="#dcc08c" strokeDasharray="2 1" />
      <path d="M36.500 780.500h7M43.500 763v38" stroke="#3b3be8" strokeWidth="1.300" />
      {[58.500, 320.500, 583, 844.500, 1107, 1369.500, 1630.500].map((x) => (
        <g key={x}><path d={`M${x} 763V799`} stroke="#e3c48e" strokeDasharray="3 2" /><path d={`M${x} 801v7`} stroke="#555" strokeWidth="1.300" /></g>
      ))}
      <path d="M43 801.500H1877" stroke="#8a8a8a" />
      <path d="M49 763H1870" stroke="#3c3423" strokeWidth="1.500" />
      <path d="M49 799.500H1870" stroke="#111" strokeWidth="1.700" />
      <path d={overview} stroke="#1010ff" strokeWidth="1.400" />
      <path d="M49.500 763V800" stroke="#111" strokeWidth="1.300" />
      <path d="M1870 763V800" stroke="#000" strokeWidth="2.500" />
      <path d="M43.500 806h12l-6-10zM1865 806h12l-6-10z" fill="#000" />
    </svg>
  );
}

/* ---------- table rows ---------- */
const rows = [
  ["1", "b", "$0", "\"工频段\".\"水箱液位-工频段...", "", "#ff2858"],
  ["2", "p", "$1", "\"水箱液位-变频段缩放后值\"", "%MD1000", "#0000ff"],
  ["3", "b", "$2", "\"工频段\".\"工频液位pid-给...", "", "#00bb40"],
  ["4", "p", "$3", "\"水箱液位-设定值\"", "%MD1005", "#a85400"],
];
const L = "#efefef", W = "#fff";

function SignalTable() {
  return (
    <Table>
      <Grid>
        <HeadRow>
          <HeadCell /><HeadCell /><HeadCell><Slot $w={17}>{ic.eye}</Slot></HeadCell>
          <HeadCell>信号基...</HeadCell><HeadCell>名称</HeadCell><HeadCell>数据类型</HeadCell><HeadCell>显示格式</HeadCell>
          <HeadCell>地址</HeadCell><HeadCell>公式</HeadCell><HeadCell><Slot $w={14}>{ic.fx}</Slot></HeadCell><HeadCell>颜色</HeadCell>
          <HeadCell $span={2}>信号组</HeadCell><HeadCell>Y轴最小</HeadCell><HeadCell>Y轴最大</HeadCell><HeadCell>单位</HeadCell><HeadCell>注释</HeadCell><HeadCell />
        </HeadRow>
        {rows.map(([n, t, id, name, addr, color]) => (
          <DataRow key={n}>
            <Cell $bg="#cfcfcf" $muted>{n}</Cell>
            <Cell $pl={1}>{t === "b" ? <TagIcon c="#2aa6ee" d="#0b62a8" /> : <TagIcon c="#7a2fd0" d="#3a1280" />}</Cell>
            <Cell $pl={3}>{ic.eye}</Cell>
            <Cell $pl={6}>{id}</Cell><Cell $pl={29}>{name}</Cell><Cell>Real</Cell><Cell $bg={L}>浮点</Cell><Cell>{addr}</Cell><Cell /><Cell />
            <Cell $pl={5}><Swatch $c={color} /></Cell><Cell $bg={L} $pl={2}>{ic.chain}</Cell>
            <Cell $bg={W} $pl={6}>1</Cell><Cell $bg={W} $pl={6}>3.920573</Cell><Cell $bg={W} $pl={6}>31.13223</Cell><Cell /><Cell $bg={W} /><Cell $bg={L} />
          </DataRow>
        ))}
        <DataRow>
          <Cell $bg="#cfcfcf" $muted>5</Cell><Cell /><Cell /><Cell /><Cell $bg={L} $pl={29}>&lt;插入新计算的信号&gt;</Cell><Cell /><Cell /><Cell />
          <Cell $bg={L} /><Cell /><Cell /><Cell /><Cell /><Cell /><Cell /><Cell /><Cell /><Cell $bg={L} />
        </DataRow>
      </Grid>
      <ScrollCol>
        <ScrollTop />
        <ScrollBtn $h={22}><I s={14}><path d="M3 14l7-8 7 8" stroke="#555" strokeWidth="3.500" /></I></ScrollBtn>
        <ScrollBtn $h={33} $mt={2}><I s={12}><path d="M1 3h18M1 8h18M1 13h18M1 18h18" stroke="#666" strokeWidth="2" /></I></ScrollBtn>
        <ScrollBtn $h={21} $mt={37}><I s={14}><path d="M3 6l7 8 7-8" stroke="#555" strokeWidth="3.500" /></I></ScrollBtn>
      </ScrollCol>
    </Table>
  );
}

const S = ({ w, n, b }: { w: number; n: string; b?: boolean }) => <Slot $w={w}>{b ? <Boxed>{ic[n]}</Boxed> : ic[n]}</Slot>;

function HostToolbar() {
  const g = "#555", lt = "#c6c6c6";
  return (
    <HostBar>
      <HostSlot $w={40}><I><path d="M0 10h7M7 4v12M7 6q4 3 6 0h5v8h-5q-2-3-6 0" stroke="#888" strokeWidth="1.500" /></I></HostSlot>
      <HostSlot $w={20}><I><rect x="6" y="1" width="13" height="13" rx="2" stroke="#1d96d2" strokeWidth="3" /><rect x="1.500" y="6" width="13" height="13" rx="2" stroke="#f59a1c" strokeWidth="3" /><path d="M6 9V3a2 2 0 0 1 2-2" stroke="#1d96d2" strokeWidth="3" /></I></HostSlot>
      <HostSlot $w={13} />
      <HostMenu $w={66}>文件(<u>F</u>)</HostMenu><HostMenu $w={66}>编辑(<u>E</u>)</HostMenu><HostMenu $w={68}>查看(<u>V</u>)</HostMenu>
      <HostMenu $w={88}>虚拟机(<u>M</u>)</HostMenu><HostMenu $w={82}>选项卡(<u>T</u>)</HostMenu><HostMenu $w={60}>帮助(<u>H</u>)</HostMenu>
      <HostSep $w={10} />
      <HostSlot $w={38}><I><path d="M2 0h6v20H2zM12 0h6v20h-6z" fill="#f96b2b" /></I></HostSlot>
      <HostSlot $w={12}><I s={10}><path d="M1 5h18l-9 10z" fill="#777" /></I></HostSlot>
      <HostSep $w={25} />
      <HostSlot $w={25}><I s={22}><path d="M5 1h10v6H5zM0 7h10v6H0zM10 7h10v6H10zM14 13v6M11 16l3 3 3-3" stroke={g} strokeWidth="1.500" /></I></HostSlot>
      <HostSep $w={25} />
      <HostSlot $w={24}><I s={21}><circle cx="11" cy="9" r="8" stroke={g} strokeWidth="1.500" /><path d="M11 4v6h4" stroke={g} strokeWidth="1.500" /><path d="M0 10h9v10H0z" fill="#fff" /><path d="M5 11v8M1 15h8" stroke="#f07840" strokeWidth="1.600" /></I></HostSlot>
      <HostSlot $w={50}><I s={21}><circle cx="11" cy="9" r="8" stroke={lt} strokeWidth="1.500" /><path d="M11 4v6h4" stroke={lt} strokeWidth="1.500" /><path d="M0 11h20v9H0z" fill="#fff" /><path d="M5 15.500h15" stroke="#fbb089" strokeWidth="3" /><path d="M0 15.500l6-5v10z" fill="#fbb089" /></I></HostSlot>
      <HostSlot $w={23}><I s={21}><circle cx="11" cy="9" r="8" stroke={g} strokeWidth="1.500" /><path d="M11 4v6h4" stroke={g} strokeWidth="1.500" /><path d="M0 12h20v8H0z" fill="#fff" /><path d="M3 16h14" stroke="#2d9ad8" strokeWidth="3" /><path d="M0 13l4 3-4 4M20 13l-4 3 4 4" stroke="#2d9ad8" strokeWidth="2" /></I></HostSlot>
      <HostSep $w={24} />
      <HostSlot $w={25}><I s={21}><path d="M1 1h18v18H1zM7 1v18" stroke={lt} strokeWidth="1.500" /></I></HostSlot>
      <HostSlot $w={47}><I s={21}><path d="M1 1h18v18H1zM1 13h18" stroke={lt} strokeWidth="1.500" /></I></HostSlot>
      <HostSlot $w={26}><HostBox><I s={22}><path d="M0 6V1h6M14 1h6v5M20 14v5h-6M6 19H0v-5M5 5h10v10H5z" stroke={g} strokeWidth="1.800" /></I></HostBox></HostSlot>
      <HostSlot $w={45}><I s={21}><path d="M3 5V1h5M14 1h4v5M3 14v5h5M7 7h8v8H7zM0 0l20 20" stroke={lt} strokeWidth="1.500" /></I></HostSlot>
      <HostSep $w={5} />
      <HostSlot $w={45}><HostBox><I s={23}><path d="M0.500 0.500h19v19h-19z" stroke={g} strokeWidth="1.500" /><path d="M4 7l3 3-3 3M9 14h6" stroke={g} strokeWidth="1.600" /></I></HostBox></HostSlot>
      <HostSep $w={5} />
      <HostSlot $w={45}><I s={23}><path d="M0.500 0.500h19v19h-19z" stroke={g} strokeWidth="1.500" /><path d="M4 16L16 4M11 4h5v5M4 11v5h5" stroke={g} strokeWidth="1.200" /></I></HostSlot>
      <HostSlot $w={5}><I s={10}><path d="M1 5h18l-9 10z" fill="#777" /></I></HostSlot>
      <HostSlot $w={10} />
      <HostTab>
        <I><path d="M1 14V1h13M5 17V5h12" stroke="#888" strokeWidth="1.300" /><path d="M10 8l9 6-9 6z" fill="#3ea010" /></I>
        <span>Windows 10 x64</span>
        <I s={12}><path d="M1 1l18 18M19 1L1 19" stroke="#bbb" strokeWidth="2" /></I>
      </HostTab>
      <HostSlot $w={338} />
      <HostSlot $w={26}><I s={24}><path d="M1 14h18v5H1z" stroke="#999" strokeWidth="1.500" /></I></HostSlot>
      <HostSlot $w={46}><I s={24}><path d="M1 3h15v16H1zM4 3V1h15v16h-3M6 8h5v6H6z" stroke="#999" strokeWidth="1.500" /></I></HostSlot>
      <HostSlot $w={28}><I s={24}><path d="M1 1h4l5 6 5-6h4v3l-6 6 6 6v3h-4l-5-6-5 6H1v-3l6-6-6-6z" stroke="#999" strokeWidth="1.300" /></I></HostSlot>
    </HostBar>
  );
}

const openWindows: [string, string][] = [
  ["over", "总."], ["fbp", "M."], ["net", "P..."], ["fbp", "C.."], ["tags", "默."], ["trace", "主."], ["db", "工."], ["fbp", "副."], ["db", "变."], ["fbp", "主."],
  ["tools", "P..."], ["box", "P..."], ["tools", "P..."], ["box", "P..."], ["proginf", "程."], ["fbb", "副."], ["trace", "主."], ["tagp", "P..."], ["db", "副."], ["trace", "T..."],
];

export default function App() {
  return (
    <Screen>
      <Global />
      <TitleBar>
        <TiaTile s={20} />
        <TitleText>Siemens  -  C:</TitleText>
        <I s={14} w={52} vb="0 0 52 14"><path d="M1 11h11" stroke="#ddd" strokeWidth="1.500" /><path d="M20 4h7v8h-7zM24 1h7v7" fill="#eee" stroke="#eee" /><path d="M40 2l10 10M50 2L40 12" stroke="#eee" strokeWidth="2.200" /></I>
      </TitleBar>
      <MenuBar>
        <MenuItem $w={68}>项目(P)</MenuItem><MenuItem $w={70}>编辑(E)</MenuItem><MenuItem $w={70}>视图(V)</MenuItem><MenuItem $w={65}>插入(I)</MenuItem>
        <MenuItem $w={72}>在线(O)</MenuItem><MenuItem $w={72}>选项(N)</MenuItem><MenuItem $w={68}>工具(T)</MenuItem><MenuItem $w={72}>窗口(W)</MenuItem><MenuItem $w={60}>帮助(H)</MenuItem>
        <Brand><span>Totally Integrated Automation</span><b>PORTAL</b></Brand>
      </MenuBar>
      <ToolBar $h={27} $bg="#cccccc" $pl={11} $pb={6}>
        <S w={30} n="newp" /><S w={30} n="open" /><S w={23} n="save" /><ToolLabel $w={77} $off>保存项目</ToolLabel><S w={33} n="print" /><Sep $w={3} />
        <S w={34} n="cut" /><S w={28} n="copy" /><S w={30} n="paste" /><S w={30} n="del" /><Sep $w={5} />
        <S w={30} n="undo" /><S w={12} n="pm" /><S w={32} n="redo" /><S w={12} n="pm" /><Sep $w={11} />
        <S w={28} n="comp" /><S w={30} n="down" /><S w={30} n="up" /><S w={30} n="sim" /><S w={30} n="rt" /><Sep $w={5} />
        <S w={27} n="plugoff" /><ToolLabel $w={73} $off>转至在线</ToolLabel><S w={31} n="plugon" /><ToolLabel $w={70}>转至离线</ToolLabel><Sep $w={17} />
        <S w={20} n="netq" /><S w={40} n="runoff" /><S w={20} n="stop" /><Sep $w={15} /><S w={23} n="xx" /><Sep $w={11} />
        <S w={28} n="splh" /><S w={30} n="splv" /><Sep $w={5} /><SearchBox>&lt;在项目中搜索&gt;</SearchBox><S w={42} n="find" />
      </ToolBar>
      <Body>
        <LeftRail>
          <RailHead><I s={16} w={9} vb="0 0 9 16"><path d="M0 0l9 8-9 8z" fill="#fff" /></I></RailHead>
          <RailTitle><span>设备与网络</span></RailTitle>
        </LeftRail>
        <Center>
          <Crumbs>
            <Crumb $w={60} $strong>项目2</Crumb><CrumbArrow $w={19} /><Crumb $w={247}>PLC_1 [CPU 1214C DC/DC/DC]</Crumb><CrumbArrow $w={19} />
            <Crumb $w={67}>Traces</Crumb><CrumbArrow $w={18} /><Crumb $w={140} $strong>主-副水箱液位</Crumb>
            <WinButtons>
              <I s={18} w={16}><path d="M1 15h18v4H1z" fill="#fff" /></I>
              <I s={16} w={16}><path d="M1 7h12v12H1z" fill="#fff" /><path d="M6 4V2h13v12h-3" stroke="#fff" strokeWidth="2.500" /></I>
              <I s={16} w={17}><path d="M1 1h18v3H1zM1 6h18v13H1z" fill="#fff" /></I>
              <I s={16} w={17}><path d="M2 2l16 16M18 2L2 18" stroke="#fff" strokeWidth="3" /></I>
            </WinButtons>
          </Crumbs>
          <TabStrip>
            <ViewTab $w={91}>{ic.cfg}组态</ViewTab>
            <ViewTab $w={110} $active>{ic.diag}示意图</ViewTab>
          </TabStrip>
          <ToolBar $h={33} $bg="#e9e9e9" $pl={3}>
            <S w={30} n="tdown" /><S w={30} n="tup" /><Sep $w={6} /><S w={31} n="tglass" b /><S w={30} n="trec" b /><S w={30} n="tstop" /><S w={30} n="tdel" /><S w={30} n="tloop" />
            <Sep $w={4} /><S w={33} n="texp" /><Sep $w={3} /><S w={33} n="tarrb" /><S w={30} n="tarrk" /><TaskGap $w={1491} /><S w={30} n="layout" />
          </ToolBar>
          <StateBar>状态: 记录<Rec>REC</Rec></StateBar>
          <ToolBar $h={31} $bg="#e9e9e9" $pl={3} $pb={4}>
            <S w={30} n="prev" /><S w={30} n="next" /><S w={30} n="wpin" /><Sep $w={6} /><S w={31} n="hand" b /><S w={30} n="zoomr" /><S w={30} n="zoomv" /><S w={30} n="zoomh" />
            <Sep $w={4} /><S w={33} n="zin" /><S w={28} n="zout" /><Sep $w={6} /><S w={33} n="z100" /><S w={27} n="y100" b /><S w={31} n="x100" b /><Sep $w={5} /><S w={32} n="waves" b /><Sep $w={3} />
            <S w={32} n="time" /><S w={9} n="pmd" /><Sep $w={14} /><S w={26} n="dots" /><S w={33} n="line" /><Sep $w={3} /><S w={33} n="vcur" /><S w={28} n="hcur" /><Sep $w={6} />
            <S w={32} n="fit" b /><Sep $w={3} /><S w={34} n="legend" b /><S w={28} n="left" b /><S w={31} n="right" /><Sep $w={3} /><S w={36} n="fill" />
          </ToolBar>
          <ChartPane>
            <Chart />
            <ComboBox>自动<i><I s={10}><path d="M0 3h20L10 17z" fill="#111" /></I></i></ComboBox>
          </ChartPane>
          <Splitter>
            <i><I s={8}><path d="M0 16h20L10 3z" fill="#111" /></I></i><i><I s={8}><path d="M0 4h20L10 17z" fill="#111" /></I></i>
          </Splitter>
          <SignalTable />
          <InfoStrip>
            <InfoTab $w={93}>{ic.props}属性</InfoTab>
            <InfoTab $w={100} $active>{ic.info}信息<InfoBadge>{ic.warn}</InfoBadge></InfoTab>
            <InfoTab $w={93}>{ic.steth}诊断</InfoTab>
            <InfoCorner>
              <I s={15}><path d="M1 6h12v13H1z" fill="#fff" /><path d="M6 3V1h13v13h-3" stroke="#fff" strokeWidth="2" /></I>
              <I s={15}><path d="M0 1h20v3H0z" fill="#fff" /><path d="M1 6h18v13H1z" fill="#ddd" /><path d="M3 9h14M3 14h14" stroke="#aaa" strokeWidth="2" /></I>
              <I s={16}><path d="M0 14h20L10 3z" fill="#fff" /></I>
            </InfoCorner>
          </InfoStrip>
        </Center>
        <RightRail>
          <RailHead $plain><I s={16} w={9} vb="0 0 9 16"><path d="M9 0L0 8l9 8z" fill="#fff" /></I></RailHead>
          <RailTab $h={92} $mb={3} $active>{ic.trace}<span>轨迹</span></RailTab>
          <RailTab $h={92} $mb={3}>{ic.task}<span>任务</span></RailTab>
          <RailTab $h={72} $mb={0}>{ic.book}<span>库</span></RailTab>
        </RightRail>
      </Body>
      <PortalBar>
        <PortalLink><I s={16} w={8} vb="0 0 9 16"><path d="M9 0L0 8l9 8z" fill="#fff" /></I>Portal 视图</PortalLink>
        <WinTabs>
          {openWindows.map(([n, t], i) => <WinTab key={i} $active={i === 16}>{ic[n]}{t}</WinTab>)}
        </WinTabs>
        <KeepButton>{ic.keep}</KeepButton>
        <Message>
          <I s={20}><circle cx="10" cy="10" r="9.500" fill="#1414f0" /><text x="7" y="16" fontSize="17" fontWeight="700" fill="#fff">i</text></I>
          <span>操作数""工频段"."工频液位 pid-给定...</span>
          <I s={16} w={34} vb="0 0 34 16"><path d="M0 0h4v16H0zM5 0h4v16H5zM10 0h4v16h-4zM15 0h4v16h-4zM25 0h4v16h-4zM30 0h4v16h-4z" fill="#f04a18" /><path d="M20 0h4v16h-4z" fill="#e8ecff" /></I>
        </Message>
      </PortalBar>
      <TaskBar>
        <TaskCell $w={60}><I><path d="M0 3l8.500-1.200V9.500H0zM9.500 1.600L20 0v9.500H9.500zM0 10.500h8.500v7.700L0 17zM9.500 10.500H20V20L9.500 18.400z" fill="#fff" /></I></TaskCell>
        <TaskCell $w={60}><I><circle cx="12.500" cy="7.500" r="6.500" stroke="#fff" strokeWidth="1.400" /><path d="M8 12l-7 7.500" stroke="#fff" strokeWidth="1.500" /></I></TaskCell>
        <TaskCell $w={60}><I><path d="M1 0v4h12V0M1 20v-4h12v4M1 6.500h12v7H1zM18 0v20" stroke="#fff" strokeWidth="1.400" /><path d="M16.500 6h3v4h-3z" fill="#fff" /></I></TaskCell>
        <TaskGap $w={9} />
        <TaskCell $w={51} $line><I s={24} w={28} vb="0 0 28 24"><path d="M0 2q0-2 2-2h8l3 3h13q2 0 2 2v18H0z" fill="#ffe391" /><path d="M0 2q0-2 2-2h8l2 4H0z" fill="#f0b92b" /><path d="M5 24V15q0-2 2-2h14q2 0 2 2v9h-4v-5H9v5z" fill="#3aafe8" /></I></TaskCell>
        <TaskGap $w={6} />
        <TaskCell $w={61} $on $line><TiaTile s={30} /></TaskCell>
        <TaskGap $w={6} />
        <TaskCell $w={51} $line><I s={27} w={28} vb="0 0 28 27"><path d="M8 1l16 2-6 23L1 20z" fill="#8fcdd8" /><path d="M8 1l17 2-1 4L6 4z" fill="#e5eef0" /><path d="M25 3l2 3-3 18-6 2z" fill="#dcdcd4" /><path d="M4 13l16 5-2 8L1 20z" fill="#5aa3b4" /></I></TaskCell>
        <TaskGap $w={1234} />
        <TaskCell $w={30}><I s={22}><circle cx="14" cy="4" r="3.200" stroke="#fff" strokeWidth="1.400" /><circle cx="6" cy="10" r="3" stroke="#fff" strokeWidth="1.400" /><path d="M11 12q0-5 4-4.500 4 1 4 6M1 19q0-6 5-6t5 5" stroke="#fff" strokeWidth="1.400" /></I></TaskCell>
        <TaskGap $w={16} />
        <TaskCell $w={28}><I s={18}><path d="M1 14l9-9 9 9" stroke="#fff" strokeWidth="1.700" /></I></TaskCell>
        <TaskCell $w={32}><I s={21}><path d="M1 1h4v5H1zM3 6v10h8M6 2h13v11M8 19h5" stroke="#fff" strokeWidth="1.400" /><path d="M14 9l6 11H8z" fill="#fcc419" /><path d="M14 13v3M14 17.500v1" stroke="#222" strokeWidth="1.500" /></I></TaskCell>
        <TaskCell $w={29}><I s={21}><path d="M1 7h3l4-4v14l-4-4H1zM11 7q2 3 0 6M13.500 4.500q4 5.500 0 11M16 2q6 8 0 16" stroke="#fff" strokeWidth="1.300" /></I></TaskCell>
        <TaskGap $w={1} />
        <Lang>英</Lang>
        <TaskGap $w={2} />
        <Clock>18:33<br />2023/12/19</Clock>
        <TaskGap $w={8} />
        <Notice><I s={21}><path d="M0 0h20v16h-9l-4 4v-4H0z" fill="#fff" /><path d="M4 4.500h12M4 8h12M4 11.500h8" stroke="#222" strokeWidth="1.500" /></I><Badge>1</Badge></Notice>
        <ShowDesktop />
      </TaskBar>
      <HostToolbar />
    </Screen>
  );
}
